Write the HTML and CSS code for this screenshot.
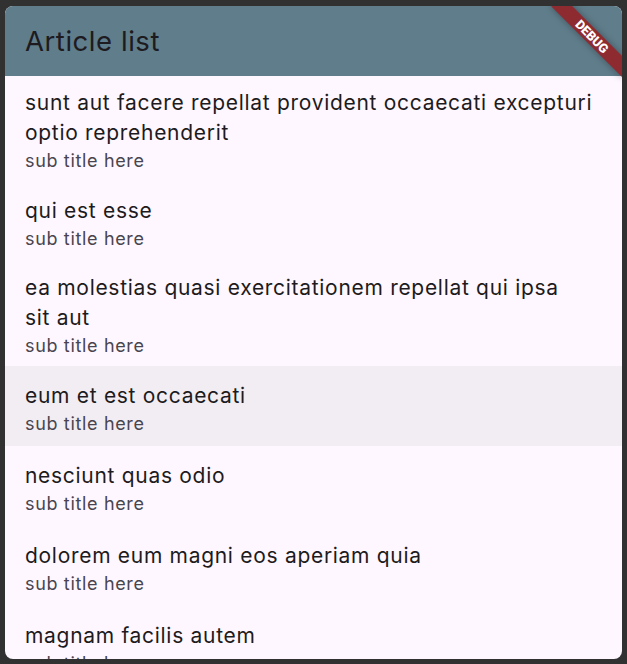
FILE: index.html
```html
<!DOCTYPE html>
<html lang="en">
<head>
<meta charset="utf-8">
<title>Article list</title>
<link rel="stylesheet" href="styles.css">
</head>
<body>
<div class="window">
  <header class="appbar">
    <h1 class="appbar-title">Article list</h1>
    <div class="debug-banner">DEBUG</div>
  </header>
  <ul class="article-list">
    <li class="tile">
      <div class="tile-title">sunt aut facere repellat provident occaecati excepturi optio reprehenderit</div>
      <div class="tile-subtitle">sub title here</div>
    </li>
    <li class="tile tile-short">
      <div class="tile-title">qui est esse</div>
      <div class="tile-subtitle">sub title here</div>
    </li>
    <li class="tile">
      <div class="tile-title">ea molestias quasi exercitationem repellat qui ipsa<br>sit aut</div>
      <div class="tile-subtitle">sub title here</div>
    </li>
    <li class="tile tile-short tile-hover">
      <div class="tile-title">eum et est occaecati</div>
      <div class="tile-subtitle">sub title here</div>
    </li>
    <li class="tile tile-short">
      <div class="tile-title">nesciunt quas odio</div>
      <div class="tile-subtitle">sub title here</div>
    </li>
    <li class="tile tile-short">
      <div class="tile-title">dolorem eum magni eos aperiam quia</div>
      <div class="tile-subtitle">sub title here</div>
    </li>
    <li class="tile tile-short">
      <div class="tile-title">magnam facilis autem</div>
      <div class="tile-subtitle">sub title here</div>
    </li>
  </ul>
</div>
</body>
</html>
```

FILE: styles.css
```css
html, body {
  margin: 0;
  padding: 0;
}

body {
  background: #313131;
  padding: 6px 5px 5px 5px;
  font-family: "Inter", "Liberation Sans", sans-serif;
  overflow: hidden;
}

.window {
  position: relative;
  width: 617px;
  height: 653px;
  border-radius: 8px;
  overflow: hidden;
  background: #fef7ff;
  display: flex;
  flex-direction: column;
}

.appbar {
  height: 70px;
  flex: none;
  background: #607d8b;
  display: flex;
  align-items: center;
  padding: 0 20px;
}

.appbar-title {
  margin: 0;
  font-size: 27.5px;
  font-weight: 400;
  line-height: 35px;
  color: #1d1b20;
  letter-spacing: 0.55px;
}

.debug-banner {
  position: absolute;
  top: 22.5px;
  right: -20px;
  width: 100px;
  height: 15px;
  transform: rotate(45deg);
  background: #8e2b31;
  box-shadow: 0 0 7px rgba(0, 0, 0, 0.35);
  color: #ffffff;
  font-family: "Roboto", "Liberation Sans", sans-serif;
  font-weight: 900;
  font-size: 12.75px;
  line-height: 15px;
  text-align: center;
}

.article-list {
  list-style: none;
  margin: 0;
  padding: 0;
  flex: 1;
  overflow: hidden;
}

.tile {
  padding: 11.5px 18px 8.5px 20px;
}

.tile-short {
  padding-top: 15px;
  padding-bottom: 10px;
}

.tile-hover {
  background: #f2edf3;
}

.tile-title {
  font-size: 21px;
  line-height: 30px;
  letter-spacing: 0.7px;
  color: #1d1b20;
}

.tile-subtitle {
  font-size: 18px;
  line-height: 25px;
  letter-spacing: 0.66px;
  color: #49454f;
}
```
